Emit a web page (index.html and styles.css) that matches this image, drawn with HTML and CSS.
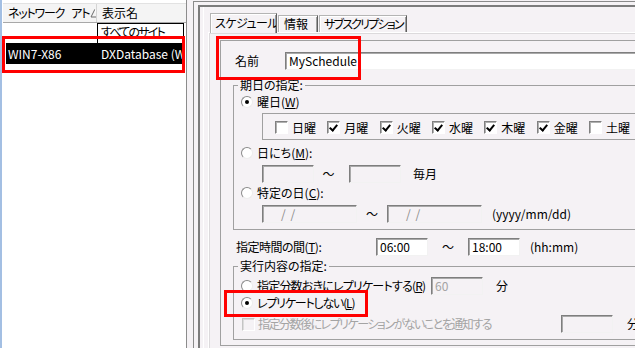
FILE: index.html
```html
<!DOCTYPE html>
<html lang="ja">
<head>
  <meta charset="UTF-8">
  <title>スケジュール</title>
  <link rel="stylesheet" href="styles.css">
</head>
<body>

<div class="window">

  <!-- list of subscriptions -->
  <div class="list-pane">
    <div class="list-head">
      <div class="col col-addr"><span class="tight-1">ネットワーク</span><span class="tight-1 word-gap">アト</span><svg class="sort" width="9" height="10" viewBox="0 0 9 10"><path d="M1 9 L5 1" stroke="#6a6a6a" fill="none"/><path d="M1 9 L8 9" stroke="#6a6a6a" fill="none"/><path d="M5 1 L8 9" stroke="#fff" fill="none"/></svg></div>
      <div class="col col-name">表示名</div>
    </div>
    <div class="list-row">
      <div class="col col-addr"></div>
      <div class="col col-name edit"><span class="tight-2">すべてのサイト</span></div>
    </div>
    <div class="list-row selected">
      <div class="col col-addr">WIN7-X86</div>
      <div class="col col-name">DXDatabase (WI</div>
    </div>
  </div>

  <!-- property sheet -->
  <div class="right">
    <div class="frame-outer">
      <div class="frame-inner">
        <div class="tab-host">
          <div class="tabs">
            <div class="tab tab-sched active"><span class="tight-05">スケジュール</span></div>
            <div class="tab tab-info">情報</div>
            <div class="tab tab-subs"><span class="tight-2">サブスクリプション</span></div>
          </div>
          <div class="tab-page">
            <div class="sched">

              <div class="name-row">
                <span class="name-label">名前</span>
                <div class="field field-name">MySchedule</div>
              </div>

              <fieldset class="group group-date">
                <legend>期日の指定:</legend>
                <div class="opt">
                  <span class="radio checked"></span>
                  <span>曜日(<u>W</u>)</span>
                </div>
                <div class="days">
                  <label class="day"><span class="check"></span>日曜</label>
                  <label class="day"><span class="check on"></span>月曜</label>
                  <label class="day"><span class="check on"></span>火曜</label>
                  <label class="day"><span class="check on"></span>水曜</label>
                  <label class="day"><span class="check on"></span>木曜</label>
                  <label class="day"><span class="check on"></span>金曜</label>
                  <label class="day"><span class="check"></span>土曜</label>
                </div>
                <div class="opt opt-gap">
                  <span class="radio"></span>
                  <span>日にち(<u>M</u>):</span>
                </div>
                <div class="inline">
                  <div class="field off w-small"></div>
                  <span class="tilde tilde-day">～</span>
                  <div class="field off w-small"></div>
                  <span class="after-day">毎月</span>
                </div>
                <div class="opt">
                  <span class="radio"></span>
                  <span>特定の日(<u>C</u>):</span>
                </div>
                <div class="inline">
                  <div class="field off w-date">/ /</div>
                  <span class="tilde tilde-date">～</span>
                  <div class="field off w-date">/ /</div>
                  <span class="after-date">(yyyy/mm/dd)</span>
                </div>
              </fieldset>

              <div class="time-row">
                <span class="time-label tight-05">指定時間の間(<u>T</u>):</span>
                <div class="field w-small">06:00</div>
                <span class="tilde tilde-time">～</span>
                <div class="field w-small">18:00</div>
                <span class="after-time">(hh:mm)</span>
              </div>

              <fieldset class="group group-run">
                <legend>実行内容の指定:</legend>
                <div class="opt opt-tall">
                  <span class="radio"></span>
                  <span class="rep-label">指定分数おきにレプリケートする(<u>R</u>)</span>
                  <div class="field off w-small grey">60</div>
                  <span class="unit">分</span>
                </div>
                <div class="opt opt-flat">
                  <span class="radio checked"></span>
                  <span class="tight-1">レプリケートしない(<u>L</u>)</span>
                </div>
                <div class="opt opt-tall opt-notify">
                  <span class="check disabled"></span>
                  <span class="notify-label grey">指定分数後にレプリケーションがないことを通知する</span>
                  <div class="field off w-small"></div>
                  <span class="unit unit-far">分</span>
                </div>
              </fieldset>

            </div>
          </div>
        </div>
      </div>
    </div>
  </div>

  <!-- annotation boxes -->
  <div class="mark mark-list"></div>
  <div class="mark mark-name"></div>
  <div class="mark mark-radio"></div>
</div>

</body>
</html>
```

FILE: styles.css
```css
* {
  box-sizing: border-box;
}

body {
  margin: 0;
  font-family: "Noto Sans CJK JP", sans-serif;
  font-size: 12px;
  line-height: 14px;
  color: #000;
  font-feature-settings: "palt";
}

.window {
  position: relative;
  display: flex;
  width: 635px;
  height: 348px;
  overflow: hidden;
  background-color: #f5f2f5;
}

/* narrower kana, closer to the bitmap UI font */
.tight-05 { letter-spacing: -0.5px; }
.tight-1 { letter-spacing: -1.2px; }
.tight-2 { letter-spacing: -1.8px; }

.word-gap { margin-left: 7px; }

/* left list */
.list-pane {
  width: 187px;
  flex: none;
  background-color: #fff;
  border-left: 2px solid #a3bfe3;
  border-right: 1px solid #8c8c8c;
  padding: 3px 0 0 1px;
}

.list-head {
  display: flex;
  height: 20px;
  background-color: #f4f4f4;
  border-top: 1px solid #e2e2e2;
  border-bottom: 1px solid #a8a8a8;
}

.list-head .col {
  display: flex;
  align-items: center;
  white-space: nowrap;
  overflow: hidden;
}

.list-head .col-addr {
  width: 94px;
  padding-left: 5px;
  border-right: 1px solid #d4d4d4;
}

.list-head .col-name {
  width: 87px;
  padding-left: 5px;
}

.sort {
  flex: none;
  margin-left: 1px;
}

.list-row {
  display: flex;
  margin-left: 3px;
  width: 178px;
  height: 20px;
}

.list-row .col-addr {
  width: 91px;
  padding-left: 2px;
}

.list-row .col-name {
  width: 87px;
  padding-left: 4px;
  white-space: nowrap;
  overflow: hidden;
}

.list-row .edit {
  border: 1px solid #000;
  border-bottom: none;
  padding: 1px 0 0 3px;
}

.list-row.selected {
  height: 21px;
  align-items: center;
  background-color: #000;
  color: #fff;
}

/* nested frames */
.right {
  flex: 1;
  padding: 1px 0 0 6px;
}

.frame-outer {
  height: 100%;
  border-left: 1px solid #8a8a8a;
  border-top: 1px solid #8a8a8a;
  padding: 3px 0 0 4px;
}

.frame-inner {
  height: 100%;
  border-left: 2px solid #7c7c7c;
  border-top: 2px solid #7c7c7c;
  padding-left: 3px;
}

.tab-host {
  height: 100%;
  border-left: 1px solid #fff;
  padding: 6px 0 0 4px;
}

/* tabs */
.tabs {
  position: relative;
  z-index: 1;
  display: flex;
  align-items: flex-end;
  height: 19px;
  margin-left: 2px;
}

.tab {
  flex: none;
  height: 17px;
  margin-right: 1px;
  padding-left: 5px;
  border-top: 1px solid #b4b4b4;
  border-left: 1px solid #b4b4b4;
  border-right: 1px solid #5e5e5e;
  box-shadow: inset 1px 1px 0 #fff, inset -1px 0 0 #a0a0a0;
  line-height: 15px;
  white-space: nowrap;
  overflow: hidden;
}

.tab.active {
  height: 20px;
  margin-bottom: -1px;
  background-color: #f5f2f5;
  line-height: 17px;
}

.tab-sched { width: 67px; padding-left: 4px; }
.tab-info { width: 40px; }
.tab-subs { width: 88px; padding-left: 4px; }

.tab-page {
  height: 100%;
  border-top: 1px solid #fff;
  border-left: 1px solid #fff;
  box-shadow: inset 1px 1px 0 #dcdadc;
  padding: 7px 0 0 11px;
}

.sched {
  width: 470px;
  height: 306px;
  border: 1px solid #a0a0a0;
  border-right: none;
  padding-left: 12px;
}

/* inputs */
.field {
  height: 18px;
  flex: none;
  background-color: #fff;
  border: 1px solid;
  border-color: #7e7e7e #f2f2f2 #f2f2f2 #7e7e7e;
  box-shadow: inset 1px 1px 0 #a9a9a9;
  padding: 1px 0 0 3px;
  white-space: nowrap;
}

.field.off {
  background-color: #f5f2f5;
}

.w-small { width: 52px; }
.w-date { width: 95px; padding-left: 18px; color: #8a8a8a; letter-spacing: 1px; }
.field-name { width: 400px; }

.grey {
  color: #a4a4a4;
}

.name-row {
  display: flex;
  align-items: center;
  height: 18px;
  margin-top: 11px;
  padding-left: 2px;
}

.name-label {
  width: 50px;
}

/* group boxes */
.group {
  width: 430px;
  min-width: 0;
  margin: 8px 0 0;
  padding: 0 0 6px;
  border: 1px solid #a0a0a0;
  border-right: none;
}

.group legend {
  margin-left: 4px;
  padding: 0 2px;
  line-height: 14px;
}

.group-run {
  margin-top: 3px;
}

.opt {
  display: flex;
  align-items: center;
  gap: 4px;
  height: 16px;
  margin: 2px 0 0 7px;
}

.opt-gap {
  margin-top: 5px;
}

.opt-tall {
  height: 18px;
  margin-top: 4px;
}

.opt-flat {
  margin-top: 0;
}

.opt-notify {
  gap: 3px;
  margin-left: 8px;
}

.radio {
  position: relative;
  width: 12px;
  height: 12px;
  flex: none;
  border-radius: 50%;
  background-color: #fff;
  border: 1px solid;
  border-color: #8a8a8a #ececec #ececec #8a8a8a;
}

.radio.checked::after {
  content: "";
  position: absolute;
  left: 3px;
  top: 3px;
  width: 4px;
  height: 4px;
  border-radius: 50%;
  background-color: #000;
}

.check {
  position: relative;
  width: 13px;
  height: 13px;
  flex: none;
  background-color: #fff;
  border: 1px solid;
  border-color: #808080 #fff #fff #808080;
  box-shadow: inset 1px 1px 0 #b0b0b0;
}

.check.on::after {
  content: "";
  position: absolute;
  left: 3px;
  top: 1px;
  width: 3px;
  height: 6px;
  border: solid #000;
  border-width: 0 2px 2px 0;
  transform: rotate(40deg);
}

.check.disabled {
  background-color: #f5f2f5;
  border-color: #c4c4c4 #fff #fff #c4c4c4;
  box-shadow: inset 1px 1px 0 #dcdcdc;
}

.days {
  display: flex;
  align-items: center;
  height: 27px;
  margin: 3px 0 0 28px;
  padding: 2px 0 0 12px;
  border: 1px solid #a0a0a0;
  border-right: none;
}

.day {
  display: flex;
  align-items: center;
  gap: 4px;
  width: 52.33px;
  flex: none;
}

.inline {
  display: flex;
  align-items: center;
  height: 18px;
  margin: 4px 0 0 28px;
}

.tilde {
  flex: none;
  text-align: center;
}

.tilde-day { width: 35px; padding-right: 6px; }
.tilde-date { width: 30px; }
.tilde-time { width: 40px; }

.after-day { margin-left: 12px; }
.after-date { margin-left: 10px; }
.after-time { margin-left: 10px; }

.time-row {
  display: flex;
  align-items: center;
  height: 18px;
  margin-top: 8px;
  padding-left: 3px;
}

.time-label {
  width: 140px;
}

.rep-label {
  width: 170px;
  flex: none;
  white-space: nowrap;
  letter-spacing: -0.8px;
}

.notify-label {
  width: 300px;
  flex: none;
  white-space: nowrap;
  letter-spacing: -1.5px;
}

.unit {
  margin-left: 9px;
}

.unit-far {
  margin-left: 11px;
}

/* red annotation boxes */
.mark {
  position: absolute;
  border: 3px solid #f00;
}

.mark-list {
  left: 2px;
  top: 36px;
  width: 183px;
  height: 37px;
}

.mark-name {
  left: 216px;
  top: 36px;
  width: 145px;
  height: 44px;
}

.mark-radio {
  left: 224px;
  top: 290px;
  width: 144px;
  height: 27px;
}
```
